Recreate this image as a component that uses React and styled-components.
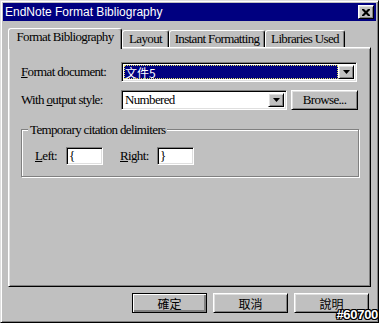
import React from "react";
import styled, { createGlobalStyle, css } from "styled-components";

const Global = createGlobalStyle`
  html, body { margin: 0; padding: 0; background: #c0c0c0; }
  body { font-family: "Liberation Serif", "Noto Sans CJK TC", serif; }
  * { box-sizing: border-box; }
`;

const serifText = css`
  font-family: "Liberation Serif", "Noto Sans CJK TC", serif;
  font-size: 13px;
  letter-spacing: -0.65px;
  color: #000;
`;

const raised = css`
  background: #c0c0c0;
  border: 1px solid;
  border-color: #fff #000 #000 #fff;
  box-shadow: inset 1px 1px #dfdfdf, inset -1px -1px #808080;
`;

const sunken = css`
  border: 1px solid;
  border-color: #808080 #fff #fff #808080;
  box-shadow: inset 1px 1px #000, inset -1px -1px #dfdfdf;
`;

const Window = styled.div`
  position: relative;
  width: 379px;
  height: 323px;
  background: #c0c0c0;
  border: 1px solid;
  border-color: #dfdfdf #000 #000 #dfdfdf;
  box-shadow: inset 1px 1px #fff, inset -1px -1px #808080;
  padding: 2px;
  display: flex;
  flex-direction: column;
  overflow: hidden;
`;

const TitleBar = styled.div`
  height: 18px;
  background: #000080;
  color: #fff;
  display: flex;
  align-items: center;
  padding: 0 2px;
  font: 12px "Liberation Sans", sans-serif;
`;

const TitleText = styled.span`
  flex: 1;
  white-space: nowrap;
`;

const CloseButton = styled.div`
  ${raised};
  width: 16px;
  height: 14px;
  display: flex;
  align-items: center;
  justify-content: center;
`;

const Body = styled.div`
  flex: 1;
  padding: 7px 5px 0 5px;
  display: flex;
  flex-direction: column;
`;

const TabStrip = styled.div`
  display: flex;
  align-items: flex-end;
  height: 19px;
  position: relative;
  z-index: 2;
`;

const Tab = styled.div`
  ${serifText};
  width: ${(p) => p.$w}px;
  height: ${(p) => (p.$active ? 21 : 17)}px;
  margin-bottom: ${(p) => (p.$active ? -2 : 0)}px;
  background: #c0c0c0;
  border-left: 1px solid #fff;
  border-top: 1px solid #fff;
  border-right: 1px solid #000;
  box-shadow: inset -1px 0 #808080;
  border-radius: 3px 3px 0 0;
  padding-top: 0;
  text-align: center;
  line-height: 15px;
  white-space: nowrap;
`;

const Panel = styled.div`
  height: 240px;
  border: 1px solid;
  border-color: #fff #000 #000 #fff;
  box-shadow: inset 1px 1px #dfdfdf, inset -1px -1px #808080;
  padding: 14px 12px 0 12px;
  display: flex;
  flex-direction: column;
`;

const Row = styled.div`
  display: flex;
  align-items: center;
  height: 20px;
  margin-top: ${(p) => p.$mt || 0}px;
`;

const Label = styled.span`
  ${serifText};
  width: ${(p) => p.$w}px;
  margin-left: ${(p) => p.$ml || 0}px;
  white-space: nowrap;
`;

const Accel = styled.span`
  text-decoration: underline;
`;

const Combo = styled.div`
  ${sunken};
  width: ${(p) => p.$w}px;
  height: 20px;
  background: #fff;
  padding: 2px;
  display: flex;
  align-items: stretch;
`;

const ComboValue = styled.div`
  ${serifText};
  flex: 1;
  display: flex;
  align-items: center;
  padding-left: 1px;
  white-space: nowrap;
  ${(p) =>
    p.$focused &&
    css`
      background: #000080;
      color: #fff;
      outline: 1px dotted #e0e060;
      outline-offset: -1px;
    `}
`;

const DropButton = styled.div`
  ${raised};
  width: 16px;
  display: flex;
  align-items: center;
  justify-content: center;
`;

const Button = styled.div`
  ${raised};
  ${serifText};
  width: ${(p) => p.$w}px;
  height: 20px;
  margin-left: ${(p) => p.$ml || 0}px;
  display: flex;
  align-items: center;
  justify-content: center;
  ${(p) =>
    p.$default &&
    css`
      border-color: #000;
      box-shadow: inset 1px 1px #fff, inset -1px -1px #808080,
        inset -2px -2px #808080;
    `}
`;

const Group = styled.fieldset`
  margin: 12px 0 0 0;
  width: 338px;
  height: 55px;
  padding: 9px 12px 0 13px;
  border: 1px solid #808080;
  box-shadow: inset 1px 1px #fff, 1px 1px #fff;
  min-width: 0;
`;

const Legend = styled.legend`
  ${serifText};
  margin-left: -7px;
  padding: 0 2px;
  background: #c0c0c0;
  line-height: 15px;
`;

const SmallInput = styled.div`
  ${sunken};
  ${serifText};
  width: 37px;
  height: 18px;
  background: #fff;
  padding: 0 2px;
  display: flex;
  align-items: center;
`;

const ButtonRow = styled.div`
  display: flex;
  justify-content: flex-end;
  margin-top: 6px;
  padding-right: 2px;
  gap: 6px;
`;

const CjkText = styled.span`
  font-family: "Noto Sans CJK TC", sans-serif;
  font-size: 12px;
  letter-spacing: 0;
`;

const Watermark = styled.div`
  position: absolute;
  right: 0;
  bottom: 0;
  font: bold 13px "Liberation Sans", sans-serif;
  line-height: 14px;
  color: #fff;
  letter-spacing: -0.3px;
  text-shadow: 1px 0 #000, -1px 0 #000, 0 1px #000, 0 -1px #000,
    1px 1px #000, -1px -1px #000, 1px -1px #000, -1px 1px #000;
`;

const Arrow = () => (
  <svg width="7" height="4" viewBox="0 0 7 4">
    <path d="M0 0h7L3.5 4z" fill="#000" />
  </svg>
);

const CloseX = () => (
  <svg width="8" height="7" viewBox="0 0 8 7">
    <path
      d="M0 0h2l2 2 2-2h2v1L5.5 3.5 8 6v1H6L4 5 2 7H0V6l2.5-2.5L0 1z"
      fill="#000"
    />
  </svg>
);

const tabs = [
  { label: "Format Bibliography", w: 114, active: true },
  { label: "Layout", w: 47 },
  { label: "Instant Formatting", w: 96 },
  { label: "Libraries Used", w: 80 },
];

export default function App() {
  return (
    <>
      <Global />
      <Window>
        <TitleBar>
          <TitleText>EndNote Format Bibliography</TitleText>
          <CloseButton>
            <CloseX />
          </CloseButton>
        </TitleBar>
        <Body>
          <TabStrip>
            {tabs.map((t) => (
              <Tab key={t.label} $w={t.w} $active={t.active}>
                {t.label}
              </Tab>
            ))}
          </TabStrip>
          <Panel>
            <Row>
              <Label $w={100}>
                <Accel>F</Accel>ormat document:
              </Label>
              <Combo $w={236}>
                <ComboValue $focused>
                  <CjkText>文件5</CjkText>
                </ComboValue>
                <DropButton>
                  <Arrow />
                </DropButton>
              </Combo>
            </Row>
            <Row $mt={8}>
              <Label $w={100}>
                With <Accel>o</Accel>utput style:
              </Label>
              <Combo $w={166}>
                <ComboValue>Numbered</ComboValue>
                <DropButton>
                  <Arrow />
                </DropButton>
              </Combo>
              <Button $w={67} $ml={4}>
                Browse...
              </Button>
            </Row>
            <Group>
              <Legend>Temporary citation delimiters</Legend>
              <Row>
                <Label $w={31}>
                  <Accel>L</Accel>eft:
                </Label>
                <SmallInput>{"{"}</SmallInput>
                <Label $w={37} $ml={17}>
                  <Accel>R</Accel>ight:
                </Label>
                <SmallInput>{"}"}</SmallInput>
              </Row>
            </Group>
          </Panel>
          <ButtonRow>
            <Button $w={75} $default>
              <CjkText>確定</CjkText>
            </Button>
            <Button $w={75}>
              <CjkText>取消</CjkText>
            </Button>
            <Button $w={75}>
              <CjkText>說明</CjkText>
            </Button>
          </ButtonRow>
        </Body>
        <Watermark>#60700</Watermark>
      </Window>
    </>
  );
}
